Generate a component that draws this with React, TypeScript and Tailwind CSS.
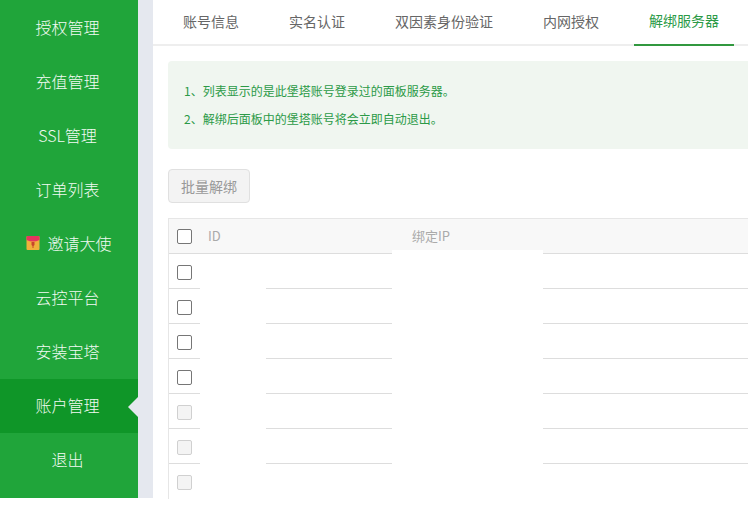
const nav = ["授权管理", "充值管理", "SSL管理", "订单列表", "邀请大使", "云控平台", "安装宝塔", "账户管理", "退出"];
const tabs = [
  { label: "账号信息" },
  { label: "实名认证" },
  { label: "双因素身份验证" },
  { label: "内网授权" },
  { label: "解绑服务器", active: true },
];
const rows = [false, false, false, false, true, true, true];

function RedPacket() {
  return (
    <svg width="14" height="16" viewBox="0 0 14 16" className="mr-[7px]">
      <rect x="0.5" y="1" width="13" height="14" rx="1" fill="#f0b03c" />
      <path d="M0.5 2a1 1 0 0 1 1-1h11a1 1 0 0 1 1 1v3q-6.500 3-13 0z" fill="#e5355f" />
      <path d="M5.500 7h3v3l-1 1v2h-1v-2l-1-1z" fill="#c8452c" />
    </svg>
  );
}

function Box({ disabled }: { disabled?: boolean }) {
  return (
    <span
      className={
        disabled
          ? "block w-[15px] h-[15px] rounded-[2px] border border-[#d0d0d0] bg-[#f4f4f4]"
          : "block w-[15px] h-[15px] rounded-[2px] border border-[#767676] bg-white"
      }
    />
  );
}

export default function App() {
  return (
    <div className="w-[748px] h-[505px] overflow-hidden bg-white font-['Noto_Sans_CJK_SC','Microsoft_YaHei',sans-serif]">
      <div className="flex h-[498px]">
        <aside className="w-[138px] shrink-0 bg-[#20a53a] pt-px">
          {nav.map((n, i) => (
            <div
              key={n}
              className={`relative h-[54px] flex items-center justify-center pb-[2px] text-[16px] font-light text-[#f2faf3] ${i === 7 ? "bg-[#0f9628]" : ""} ${i === 4 ? "" : "pr-[3px]"}`}
            >
              {i === 4 && <RedPacket />}
              {n}
              {i === 7 && (
                <span className="absolute right-0 top-[18px] w-0 h-0 border-y-[10px] border-y-transparent border-r-[10px] border-r-[#e5e8ef]" />
              )}
            </div>
          ))}
        </aside>
        <div className="w-[15px] shrink-0 bg-[#e5e8ef]" />
        <main className="flex-1 min-w-0 bg-white">
          <div className="flex h-[46px] border-b-2 border-[#eeeeee] pl-[15px] gap-[20px]">
            {tabs.map((t) => (
              <div
                key={t.label}
                className={`px-[15px] h-[46px] shrink-0 flex items-center justify-center text-[14px] pb-[4px] ${t.active ? "text-[#2b9a47] border-b-2 border-[#31983f]" : "text-[#666666]"}`}
              >
                {t.label}
              </div>
            ))}
          </div>
          <div className="relative pl-[15px] pt-[15px] w-[640px]">
            <div className="h-[88px] w-[700px] rounded-[4px] bg-[#f0f6f0] pl-[16px] pb-[1px] flex flex-col justify-center gap-[10px] text-[12px] leading-[18px] text-[#2b9a47]">
              <p>1、列表显示的是此堡塔账号登录过的面板服务器。</p>
              <p>2、解绑后面板中的堡塔账号将会立即自动退出。</p>
            </div>
            <button className="mt-[20px] block w-[82px] h-[34px] rounded-[4px] border border-[#e0e0e0] bg-[#f3f3f3] text-[14px] text-[#999999]">
              批量解绑
            </button>
            <div className="relative mt-[15px] w-[700px] border-l border-t border-[#e6e6e6]">
              <div className="flex items-center h-[35px] bg-[#f8f8f8] border-b border-[#dddddd] text-[13px] text-[#aaaaaa]">
                <div className="w-[31px] pl-[8px]"><Box /></div>
                <div className="w-[212px] pl-[8px]">ID</div>
                <div>绑定IP</div>
              </div>
              {rows.map((d, i) => (
                <div key={i} className={`flex items-center h-[35px] pt-[2px] ${i < 6 ? "border-b border-[#dddddd]" : ""}`}>
                  <div className="w-[31px] pl-[8px]"><Box disabled={d} /></div>
                </div>
              ))}
              <div className="absolute left-[31px] top-[35px] w-[66px] h-[250px] bg-white" />
              <div className="absolute left-[223px] top-[31px] w-[151px] h-[250px] bg-white" />
            </div>
          </div>
        </main>
      </div>
    </div>
  );
}
